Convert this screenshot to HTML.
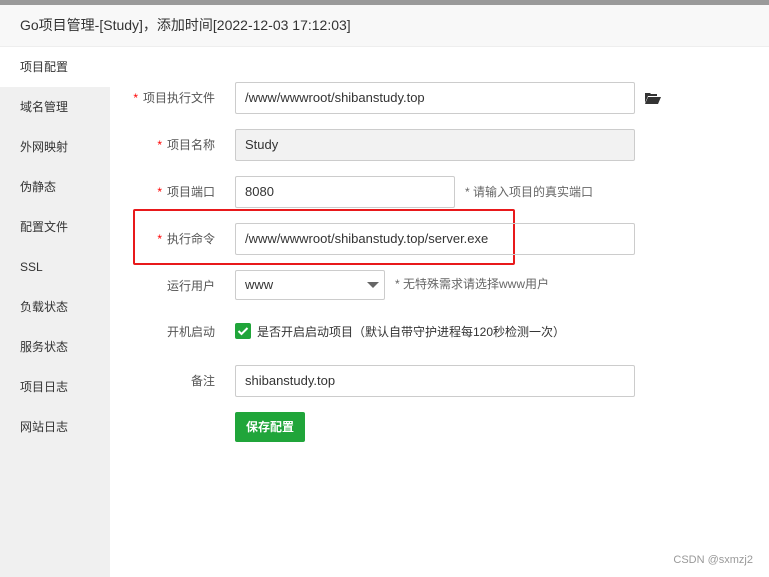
<!DOCTYPE html>
<html><head><meta charset="utf-8"><style>
*{box-sizing:border-box;margin:0;padding:0}
body{width:769px;height:577px;overflow:hidden;background:#fff;font-family:"Liberation Sans","Noto Sans CJK SC",sans-serif;font-size:12px;color:#555;position:relative}
.top{position:absolute;left:0;top:0;width:769px;height:5px;background:#9a9a9a}
.hd{position:absolute;left:0;top:5px;width:769px;height:42px;background:#f8f8f8;border-bottom:1px solid #eee;font-size:14px;color:#333;line-height:41px;padding-left:20px}
.side{position:absolute;left:0;top:47px;width:110px;height:530px;background:#f0f0f0}
.side div{height:40px;line-height:40px;padding-left:20px;color:#333}
.side .on{background:#fff}
.lbl{position:absolute;width:100px;right:554px;text-align:right;color:#555;line-height:16px}
.lbl b{color:#f00;font-weight:normal;margin-right:5px}
.in{position:absolute;left:235px;height:32px;border:1px solid #ccc;border-radius:2px;line-height:30px;padding-left:9px;color:#333;font-size:13px}
.tip{position:absolute;color:#666;line-height:16px}
</style></head><body>
<div class="top"></div>
<div class="hd">Go项目管理-[Study]，添加时间[2022-12-03 17:12:03]</div>
<div class="side"><div class="on">项目配置</div><div>域名管理</div><div>外网映射</div><div>伪静态</div><div>配置文件</div><div>SSL</div><div>负载状态</div><div>服务状态</div><div>项目日志</div><div>网站日志</div></div>

<div class="lbl" style="top:90px"><b>*</b>项目执行文件</div>
<div class="in" style="top:82px;width:400px">/www/wwwroot/shibanstudy.top</div>
<svg style="position:absolute;left:645px;top:92px" width="16" height="12" viewBox="0 0 16 12"><path d="M0 1h5l1 1h6v2H3L0 11z" fill="#333"/><path d="M3 5h13l-3 7H0z" fill="#333"/></svg>

<div class="lbl" style="top:137px"><b>*</b>项目名称</div>
<div class="in" style="top:129px;width:400px;background:#f2f2f2">Study</div>

<div class="lbl" style="top:184px"><b>*</b>项目端口</div>
<div class="in" style="top:176px;width:220px">8080</div>
<div class="tip" style="left:465px;top:184px">* 请输入项目的真实端口</div>

<div style="position:absolute;left:133px;top:209px;width:382px;height:56px;border:2px solid #e8191b;border-radius:2px"></div>
<div class="lbl" style="top:231px"><b>*</b>执行命令</div>
<div class="in" style="top:223px;width:400px">/www/wwwroot/shibanstudy.top/server.exe</div>

<div class="lbl" style="top:278px">运行用户</div>
<div class="in" style="top:270px;width:150px;height:30px;line-height:28px">www</div>
<div style="position:absolute;left:367px;top:282px;border-left:6px solid transparent;border-right:6px solid transparent;border-top:6px solid #666"></div>
<div class="tip" style="left:395px;top:276px">* 无特殊需求请选择www用户</div>

<div class="lbl" style="top:324px">开机启动</div>
<div style="position:absolute;left:235px;top:323px;width:16px;height:16px;background:#20a53a;border-radius:2px"><svg width="16" height="16" viewBox="0 0 16 16"><path d="M3.5 8l3 3 6-6" stroke="#fff" stroke-width="2" fill="none"/></svg></div>
<div class="tip" style="left:257px;top:324px;color:#333">是否开启启动项目（默认自带守护进程每120秒检测一次）</div>

<div class="lbl" style="top:373px">备注</div>
<div class="in" style="top:365px;width:400px">shibanstudy.top</div>

<div style="position:absolute;left:235px;top:412px;width:70px;height:30px;background:#20a53a;border-radius:2px;color:#fff;font-weight:bold;line-height:30px;text-align:center">保存配置</div>

<div style="position:absolute;right:16px;top:554px;color:#999;font-size:11px">CSDN @sxmzj2</div>
</body></html>
